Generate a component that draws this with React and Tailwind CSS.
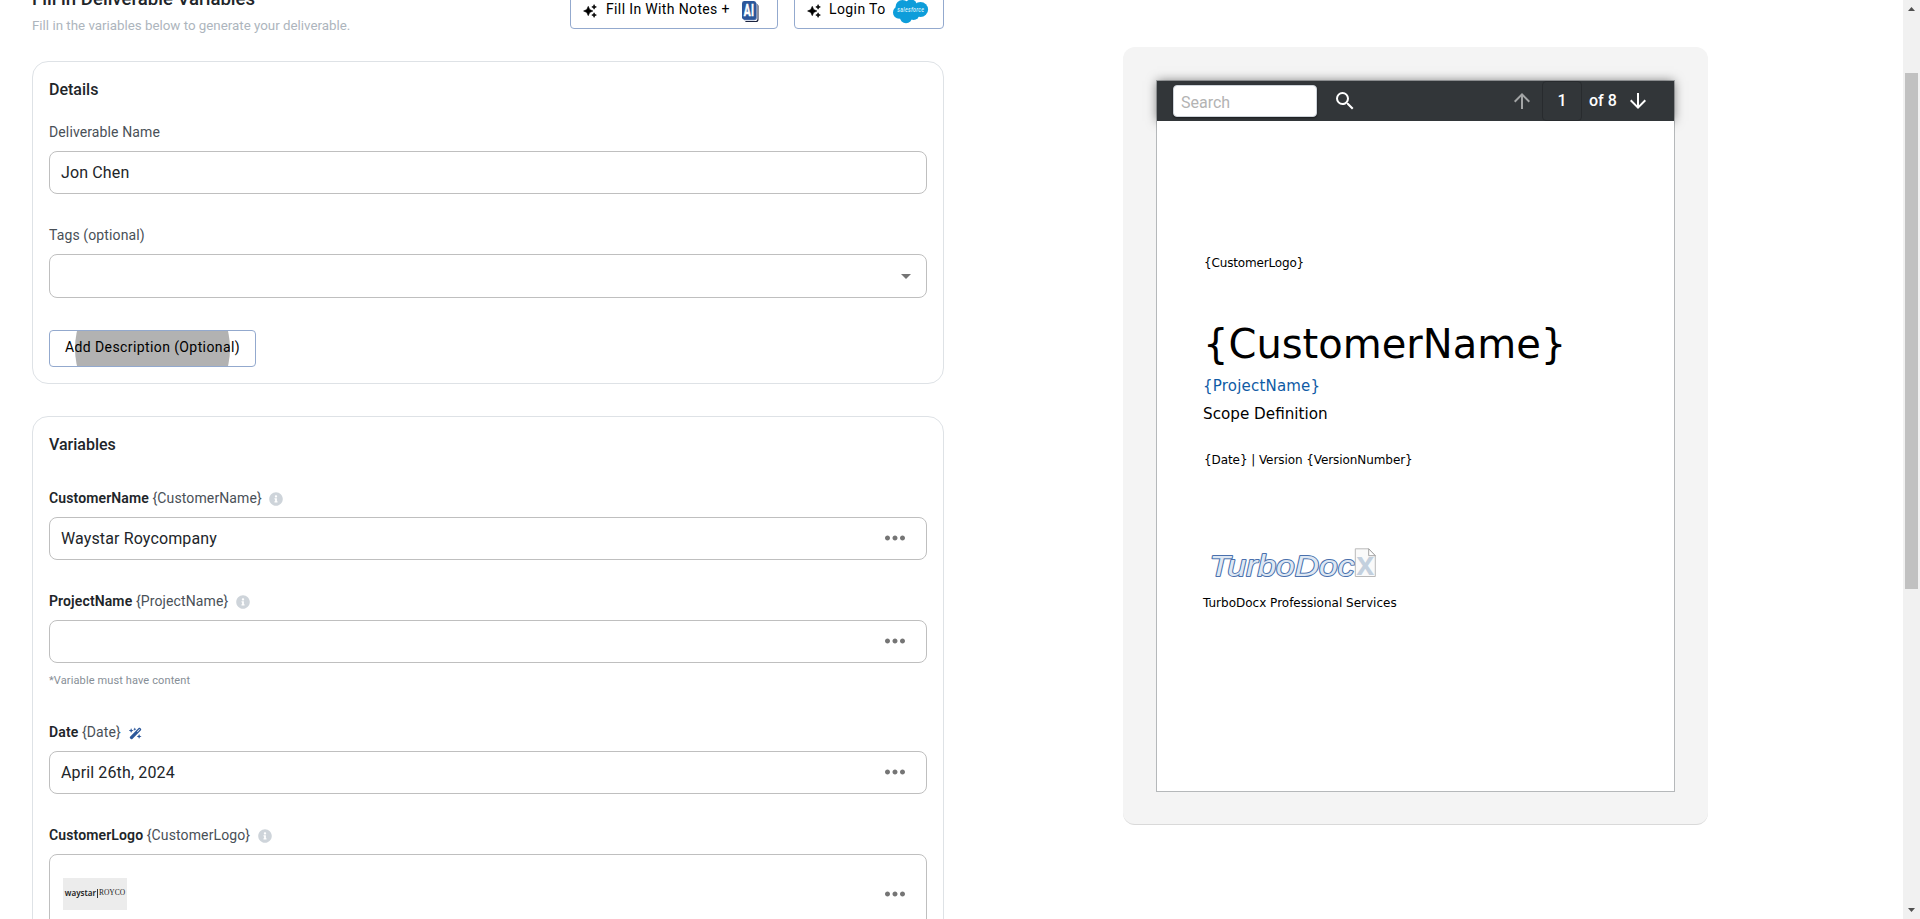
import React from "react";
import {
  MdArrowDropDown,
  MdSearch,
  MdArrowUpward,
  MdArrowDownward,
  MdMoreHoriz,
} from "react-icons/md";
import { FaInfoCircle } from "react-icons/fa";
import { FaWandMagicSparkles } from "react-icons/fa6";

const Sparkles = () => (
  <svg
    viewBox="0 0 24 24"
    className="mt-[11px] size-[14px] shrink-0"
    fill="currentColor"
    stroke="currentColor"
    strokeWidth="1"
  >
    <path d="m19 9 1.25-2.75L23 5l-2.75-1.25L19 1l-1.25 2.75L15 5l2.75 1.25L19 9zm0 6-1.25 2.75L15 19l2.75 1.25L19 23l1.25-2.75L23 19l-2.75-1.25L19 15zm-7.5-5.5L9 4 6.5 9.5 1 12l5.5 2.5L9 20l2.5-5.5L17 12l-5.5-2.5z" />
  </svg>
);

const AiBadge = () => (
  <svg width="17" height="22" viewBox="0 0 17 22" className="shrink-0">
    <rect x="2.6" y="2.8" width="13.9" height="18.2" rx="2.6" fill="#1b2340" />
    <rect x="1.6" y="1.6" width="13.9" height="18.4" rx="2.6" fill="#ffffff" />
    <rect x="0.9" y="0.9" width="13.9" height="18.3" rx="2.6" fill="#5b79b1" />
    <rect x="0" y="0" width="14" height="18.6" rx="2.4" fill="#2b579a" />
    <text
      x="7"
      y="15.3"
      textAnchor="middle"
      textLength="10.4"
      lengthAdjust="spacingAndGlyphs"
      fontFamily="Roboto, sans-serif"
      fontWeight="700"
      fontSize="17"
      fill="#ffffff"
      stroke="#ffffff"
      strokeWidth="0.5"
    >
      AI
    </text>
  </svg>
);

const SalesforceCloud = () => (
  <svg width="36" height="25" viewBox="0 0 36 25" className="shrink-0">
    <g fill="#0d9dda">
      <circle cx="9.5" cy="8" r="7" />
      <circle cx="18" cy="6.5" r="6" />
      <circle cx="27.5" cy="10.5" r="7.6" />
      <circle cx="6.2" cy="13.5" r="6.2" />
      <circle cx="13" cy="18" r="6.2" />
      <circle cx="20.5" cy="15" r="6" />
      <rect x="7" y="7" width="20" height="10" />
    </g>
    <text
      x="17.8"
      y="13"
      textAnchor="middle"
      textLength="27"
      lengthAdjust="spacingAndGlyphs"
      fontFamily="Roboto, sans-serif"
      fontStyle="italic"
      fontWeight="500"
      fontSize="7"
      fill="#d9f1fb"
    >
      salesforce
    </text>
  </svg>
);

const TurboLogo = () => (
  <svg width="170" height="30" viewBox="0 0 170 30" className="block">
    <g
      fontFamily="'Liberation Sans', sans-serif"
      fontStyle="italic"
      fontSize="29.5"
      strokeLinejoin="round"
    >
      <text
        x="3.5"
        y="27.9"
        textLength="145"
        lengthAdjust="spacingAndGlyphs"
        fill="#4a70ad"
        stroke="#4a70ad"
        strokeWidth="1.9"
      >
        TurboDoc
      </text>
      <text
        x="3.5"
        y="27.9"
        textLength="145"
        lengthAdjust="spacingAndGlyphs"
        fill="#dfe8f3"
        aria-hidden="true"
      >
        TurboDoc
      </text>
    </g>
    <path d="M149.3 0.8h13.4l6.6 6.8v20.9h-20z" fill="#fafafa" stroke="#b9b9b9" strokeWidth="1" />
    <path d="M162.7 0.8v6.9h6.6z" fill="#ffffff" stroke="#9a9a9a" strokeWidth="0.9" />
    <text
      x="159.3"
      y="26.6"
      textAnchor="middle"
      textLength="18"
      lengthAdjust="spacingAndGlyphs"
      fontFamily="'Liberation Sans', sans-serif"
      fontWeight="700"
      fontSize="33"
      fill="#c3d0de"
    >
      x
    </text>
  </svg>
);

const OutlineButton = ({ className = "", children }) => (
  <button
    className={`relative flex h-[37px] shrink-0 overflow-hidden rounded-[4px] border border-[#93a9ce] bg-white text-sm leading-4 tracking-[0.4px] whitespace-nowrap text-black ${className}`}
  >
    {children}
  </button>
);

const Field = ({ className = "h-[43px]", children, menu }) => (
  <div
    className={`mt-[11px] flex items-center rounded-[8px] border border-[#bfbfbf] bg-white pl-[11px] text-base leading-[19px] tracking-[0.13px] text-[#212529] ${className}`}
  >
    {children}
    {menu && <MdMoreHoriz className="mr-[16.5px] mb-px ml-auto size-[30px] text-[#757575]" />}
  </div>
);

const VariableLabel = ({ name, icon, className = "mt-[33px]" }) => (
  <div className={`flex h-4 text-sm leading-4 tracking-[0.12px] whitespace-pre text-[#495057] ${className}`}>
    <span className="font-semibold tracking-[0.12px] text-[#212529]">{name}</span>
    <span> {`{${name}}`}</span>
    {icon === "wand" ? (
      <FaWandMagicSparkles className="mt-[3px] ml-[8px] size-[13px] text-[#2b579a]" />
    ) : (
      <FaInfoCircle className="mt-[2px] ml-[7.5px] size-[14px] text-[#ced4da]" />
    )}
  </div>
);

export default function App() {
  return (
    <div className="flex h-[919px] w-[1920px] overflow-hidden bg-white font-['Roboto',sans-serif]">
      <main className="ml-8 w-[912px] shrink-0">
        <header className="flex h-[61px] items-start">
          <div className="-mt-3">
            <h3 className="text-[18.6px] leading-[22px] font-medium whitespace-nowrap text-[#212529]">
              Fill in Deliverable Variables
            </h3>
            <p className="mt-2 text-[13.33px] leading-4 whitespace-nowrap text-[#adb5bd]">
              Fill in the variables below to generate your deliverable.
            </p>
          </div>
          <OutlineButton className="-mt-2 ml-auto w-[208px] pl-[12px]">
            <Sparkles />
            <span className="mt-2 ml-[9px] tracking-[0.36px]">Fill In With Notes +</span>
            <span className="mt-2 ml-[12px]">
              <AiBadge />
            </span>
          </OutlineButton>
          <OutlineButton className="-mt-2 ml-4 w-[150px] pl-[12px]">
            <Sparkles />
            <span className="mt-2 ml-[8px]">Login To</span>
            <span className="mt-[6px] ml-[7px]">
              <SalesforceCloud />
            </span>
          </OutlineButton>
        </header>

        <section className="h-[323px] rounded-[16px] border border-[#dee2e6] px-4 pt-[18px]">
          <h4 className="text-base leading-[19px] font-medium text-[#212529]">Details</h4>
          <div className="mt-[25px] text-sm leading-4 tracking-[0.12px] text-[#495057]">Deliverable Name</div>
          <Field>Jon Chen</Field>
          <div className="mt-[33px] text-sm leading-4 tracking-[0.12px] text-[#495057]">Tags (optional)</div>
          <Field className="h-[44px]">
            <MdArrowDropDown className="mr-[8px] ml-auto size-6 text-[#757575]" />
          </Field>
          <OutlineButton className="mt-8 w-[207px] pl-[15px]">
            <span className="absolute -top-[60px] left-[25px] size-[155px] rounded-full bg-[#b2b2b2]" />
            <span className="relative mt-2">Add Description (Optional)</span>
          </OutlineButton>
        </section>

        <section className="mt-8 h-[560px] rounded-[16px] border border-[#dee2e6] px-4 pt-[18px]">
          <h4 className="text-base leading-[19px] font-medium text-[#212529]">Variables</h4>
          <VariableLabel name="CustomerName" className="mt-9" />
          <Field menu>Waystar Roycompany</Field>
          <VariableLabel name="ProjectName" />
          <Field menu />
          <p className="mt-[11px] text-[11px] leading-[13px] tracking-[0.12px] text-[#868e96]">
            *Variable must have content
          </p>
          <VariableLabel name="Date" icon="wand" className="mt-[37px]" />
          <Field menu>April 26th, 2024</Field>
          <VariableLabel name="CustomerLogo" />
          <Field menu className="h-[80px]">
            <div className="ml-[2px] flex h-8 w-16 items-center justify-center bg-[#ececec] pb-[2px] text-[8.5px] leading-none tracking-normal whitespace-nowrap text-[#222]">
              <span className="font-['Noto_Sans',sans-serif] text-[8px] font-semibold">waystar</span>
              <span className="mx-px h-[9px] w-px bg-[#333]" />
              <span className="font-['Liberation_Serif',serif] text-[7.5px]">ROYCO</span>
            </div>
          </Field>
        </section>
      </main>

      <aside className="mt-[47px] ml-[179px] h-[778px] w-[585px] shrink-0 rounded-[12px] border-b border-[#d9d9d9] bg-[#f4f4f4] p-[33px]">
        <div className="h-[712px] w-[519px] border border-[#b5b8ba]">
          <div className="flex h-10 items-center bg-[#323639] pr-6 pl-4 text-base leading-[19px] text-white shadow-[0_0_10px_rgba(0,0,0,0.5)]">
            <div className="h-8 w-[144px] rounded-[4px] border border-[#ced4da] bg-white pt-[7px] pl-[7px] text-[#b3b3b3] shadow-[0_1px_2px_rgba(0,0,0,0.5)]">
              Search
            </div>
            <MdSearch className="ml-4 size-6" />
            <MdArrowUpward className="ml-auto size-6 text-[#a3a5a6]" />
            <div className="ml-2 flex h-10 w-10 items-center justify-center rounded-[4px] border border-[#282b2e] pb-[2px] font-medium">
              1
            </div>
            <span className="ml-[7px] w-7 pb-[2px] font-medium whitespace-nowrap">of 8</span>
            <MdArrowDownward className="ml-[9px] size-6" />
          </div>
          <div className="relative h-[670px] bg-white pt-[135px] pl-[46px] font-['DejaVu_Sans',sans-serif] whitespace-nowrap text-black">
            <p className="ml-px text-xs leading-[14px] tracking-[-0.16px]">{"{CustomerLogo}"}</p>
            <h1 className="mt-[51px] text-[40px] leading-[46px]">{"{CustomerName}"}</h1>
            <p className="mt-[10px] text-[15px] leading-[18px] tracking-[0.2px] text-[#0f5ba5]">{"{ProjectName}"}</p>
            <p className="mt-[10px] text-[15.2px] leading-[18px]">Scope Definition</p>
            <p className="mt-[30px] ml-px text-xs leading-[14px] tracking-[-0.08px]">
              {"{Date} | Version {VersionNumber}"}
            </p>
            <div className="mt-[81px] ml-[3px]">
              <TurboLogo />
            </div>
            <p className="mt-[18px] text-xs leading-[14px]">TurboDocx Professional Services</p>
          </div>
        </div>
      </aside>

      <div className="ml-auto flex h-full w-[17px] flex-col items-center bg-[#f1f1f1]">
        <svg width="7" height="4" viewBox="0 0 7 4" className="mt-[7px] shrink-0">
          <path d="M3.5 0L7 4H0z" fill="#505050" />
        </svg>
        <div className="mt-[62px] h-[516px] w-[13px] bg-[#c1c1c1]" />
        <svg width="7" height="4" viewBox="0 0 7 4" className="mt-auto mb-[7px] shrink-0">
          <path d="M0 0H7L3.5 4z" fill="#505050" />
        </svg>
      </div>
    </div>
  );
}
